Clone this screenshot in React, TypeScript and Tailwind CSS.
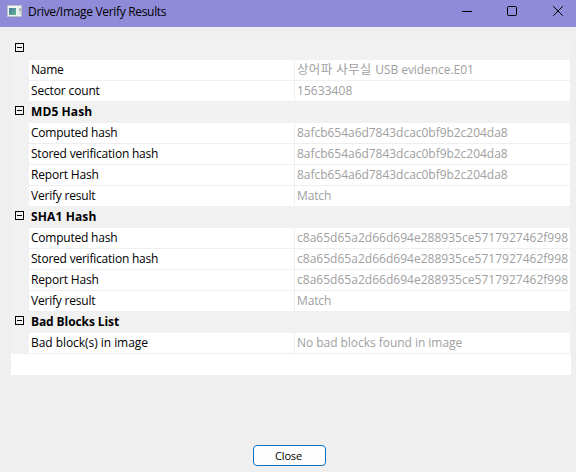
import React from "react";

type Row = { label: string; value: React.ReactNode; lt: string; vt: string };
type Group = { title: string; tt: string; rows: Row[] };

const md5 = "8afcb654a6d7843dcac0bf9b2c204da8";
const sha1 = "c8a65d65a2d66d694e288935ce5717927462f998";
const hash5 = "tracking-[-0.03px]";
const hash1 = "tracking-[0.02px]";

const fileName = (
  <>
    <span className="text-[12.5px] tracking-[0.35px]">상어파 사무실 </span>
    USB evidence.E01
  </>
);

const groups: Group[] = [
  {
    title: "",
    tt: "",
    rows: [
      { label: "Name", value: fileName, lt: "tracking-[-0.25px]", vt: "tracking-[-0.06px]" },
      { label: "Sector count", value: "15633408", lt: "tracking-[-0.15px]", vt: "tracking-[0.05px]" },
    ],
  },
  {
    title: "MD5 Hash",
    tt: "tracking-[0.1px]",
    rows: [
      { label: "Computed hash", value: md5, lt: "tracking-[-0.22px]", vt: hash5 },
      { label: "Stored verification hash", value: md5, lt: "tracking-[-0.22px]", vt: hash5 },
      { label: "Report Hash", value: md5, lt: "tracking-[-0.18px]", vt: hash5 },
      { label: "Verify result", value: "Match", lt: "tracking-[-0.2px]", vt: "tracking-[-0.15px]" },
    ],
  },
  {
    title: "SHA1 Hash",
    tt: "tracking-[0.12px]",
    rows: [
      { label: "Computed hash", value: sha1, lt: "tracking-[-0.22px]", vt: hash1 },
      { label: "Stored verification hash", value: sha1, lt: "tracking-[-0.22px]", vt: hash1 },
      { label: "Report Hash", value: sha1, lt: "tracking-[-0.18px]", vt: hash1 },
      { label: "Verify result", value: "Match", lt: "tracking-[-0.2px]", vt: "tracking-[-0.15px]" },
    ],
  },
  {
    title: "Bad Blocks List",
    tt: "tracking-[-0.1px]",
    rows: [
      {
        label: "Bad block(s) in image",
        value: "No bad blocks found in image",
        lt: "tracking-[-0.05px]",
        vt: "tracking-[-0.04px]",
      },
    ],
  },
];

function Collapse() {
  return (
    <span className="mt-[4px] ml-[4px] flex h-[9px] w-[9px] shrink-0 items-center justify-center border border-black">
      <span className="h-px w-[5px] bg-black" />
    </span>
  );
}

function AppIcon() {
  return (
    <svg width="16" height="14" viewBox="0 0 16 14" shapeRendering="crispEdges">
      <defs>
        <linearGradient id="pane" x1="0" y1="0" x2="1" y2="1">
          <stop offset="0" stopColor="#4a78a8" />
          <stop offset="1" stopColor="#5fb888" />
        </linearGradient>
      </defs>
      <rect x="0" y="0" width="15" height="12" fill="#c0c0cc" />
      <rect x="1" y="1" width="13" height="10" fill="#f2f4f4" />
      <rect x="2" y="3" width="7" height="7" fill="url(#pane)" />
      <rect x="10" y="3" width="1" height="7" fill="#e6e8ea" />
      <rect x="12" y="3" width="2" height="3" fill="#a9c0b4" />
      <rect x="12" y="6" width="2" height="4" fill="#d9dddd" />
    </svg>
  );
}

export default function App() {
  return (
    <div className="flex h-[472px] w-[576px] flex-col overflow-hidden bg-[#efefef] font-['Open_Sans','Noto_Sans_CJK_KR',sans-serif] text-[12px] leading-[20px] whitespace-nowrap text-black">
      <header className="flex h-[27px] shrink-0 items-start bg-[#8f8bd8]">
        <div className="mt-[5px] ml-[7px] h-[14px] w-[16px]">
          <AppIcon />
        </div>
        <h1 className="mt-[2px] ml-[5px] grow text-[12px] leading-[20px] tracking-[-0.32px]">Drive/Image Verify Results</h1>
        <svg width="114" height="27" viewBox="462 0 114 27" fill="none" stroke="#000">
          <path d="M462 11.5h10" />
          <rect x="507.5" y="6.5" width="9" height="9" rx="1" />
          <path d="M553.2 6.2l9.6 9.6M562.8 6.2l-9.6 9.6" />
        </svg>
      </header>

      <main className="mt-[12px] ml-[11px] w-[560px] shrink-0">
        {groups.map((g, i) => (
          <section key={i} className="w-[559px] bg-[#f1f1f1]">
            <div className="flex h-[21px]">
              <div className="flex w-[20px] shrink-0">
                <Collapse />
              </div>
              <h2 className={`font-bold ${g.tt}`}>{g.title}</h2>
            </div>
            {g.rows.map((r, j) => (
              <div key={j} className="ml-[18px] flex h-[21px] border-b border-[#efefef] bg-white">
                <div className={`w-[266px] shrink-0 border-r border-[#efefef] pl-[2px] ${r.lt}`}>{r.label}</div>
                <div className={`overflow-hidden pl-[2px] text-[#a0a0a0] ${r.vt}`}>{r.value}</div>
              </div>
            ))}
          </section>
        ))}
        <div className="h-[21px] bg-white" />
      </main>

      <footer className="mt-[70px] flex pl-[253px]">
        <button className="h-[21px] w-[73px] rounded-[4px] border border-[#0f70c0] bg-[#fdfdfd] pr-[2px] text-[11px] leading-[19px] tracking-[-0.15px]">
          Close
        </button>
      </footer>
    </div>
  );
}
